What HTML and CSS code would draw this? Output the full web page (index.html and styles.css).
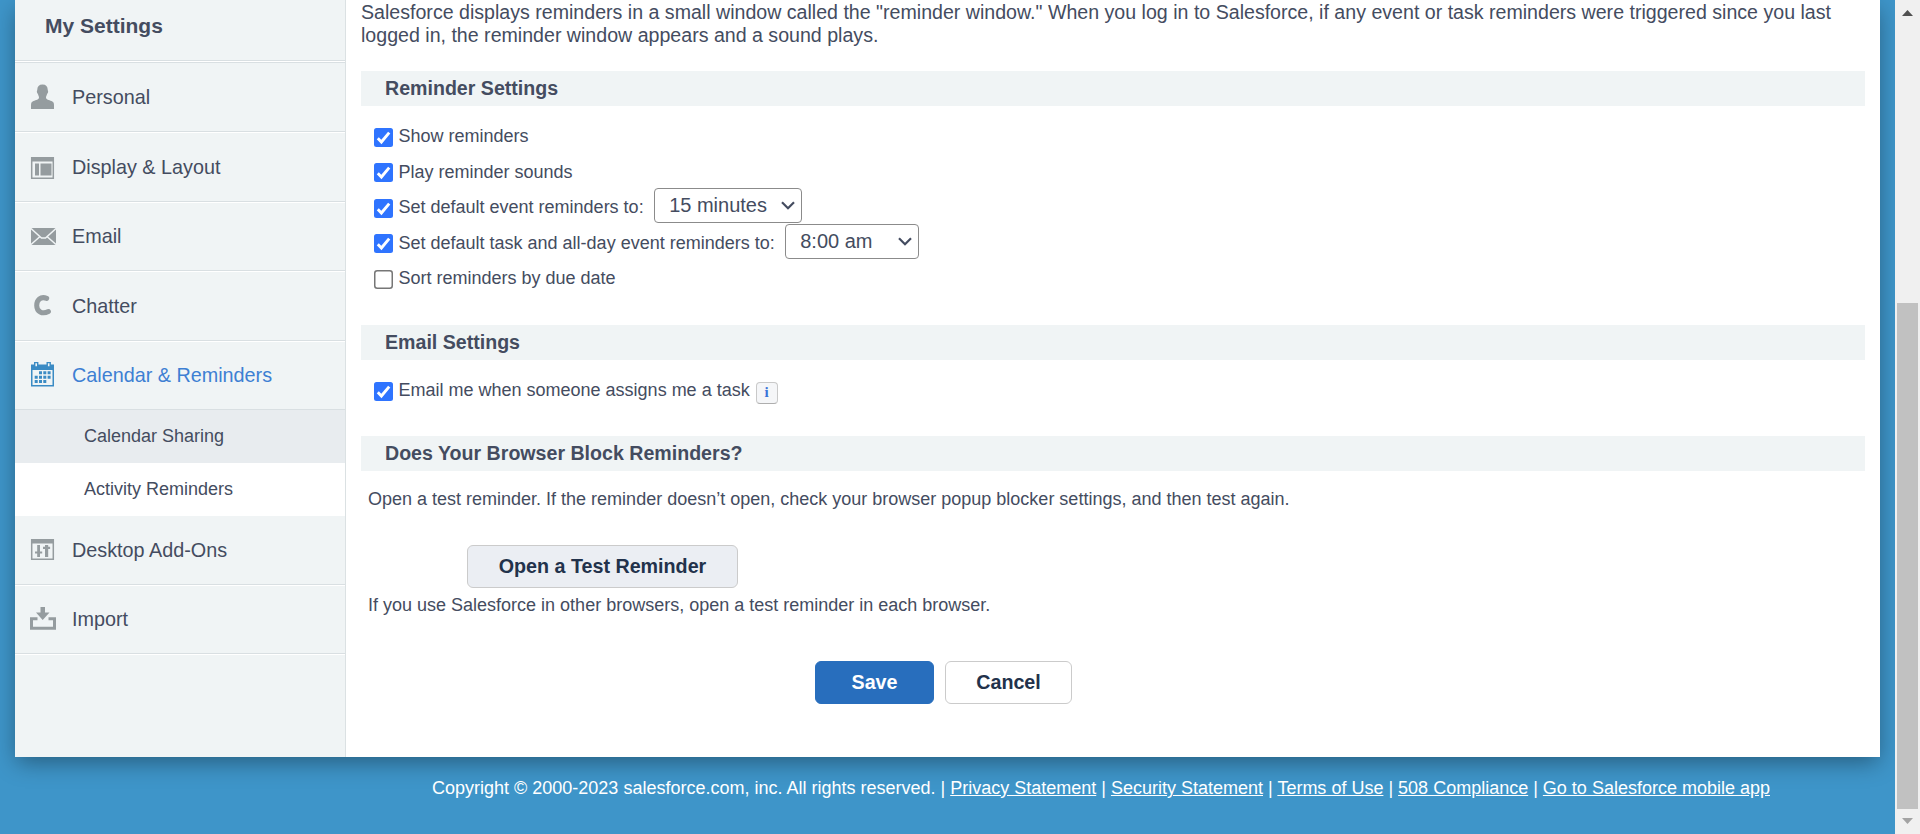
FILE: index.html
```html
<!DOCTYPE html>
<html lang="en">
<head>
<meta charset="utf-8">
<title>Activity Reminders</title>
<link rel="stylesheet" href="styles.css">
</head>
<body>
<svg class="defs" width="0" height="0">
  <symbol id="checked" viewBox="0 0 19 19"><rect width="19" height="19" rx="2.500" fill="#2f74ff"/><path d="M3.800 10.300 7.400 14 15.200 4.600" fill="none" stroke="#fff" stroke-width="2.900"/></symbol>
  <symbol id="unchecked" viewBox="0 0 19 19"><rect x=".75" y=".75" width="17.500" height="17.500" rx="2.500" fill="#fff" stroke="#767676" stroke-width="1.500"/></symbol>
</svg>
<div class="screen">
  <div class="viewport">
    <div class="page">
      <nav class="sidebar">
        <h2 class="nav-title">My Settings</h2>
        <a class="item personal"><svg class="icon" viewBox="0 0 26 26"><path d="M12.500 0.500c3.500 0 5.200 2 5.200 5 0 1 .6 1.400.4 2.500-.2 1.200-.8 1.400-1.100 2.200-.4 1.400-1 2-1 3.300 0 2.200 3 2.500 5.500 3.500 2 .8 2.500 2 2.500 4v4H1v-4c0-2 .5-3.200 2.500-4 2.500-1 5.500-1.300 5.500-3.500 0-1.300-.6-1.900-1-3.300-.3-.8-.9-1-1.100-2.200C6.700 6.900 7.300 6.500 7.300 5.500c0-3 1.700-5 5.200-5z" fill="#959c9f"/></svg>Personal</a>
        <a class="item"><svg class="icon" viewBox="0 0 26 26"><path d="M1.700 3.700h21.600v20.600H1.700z" fill="none" stroke="#959c9f" stroke-width="1.500"/><path d="M1 3h23v4.500H1zM5 9.500h4v12H5zm5.500 0h11v12h-11z" fill="#959c9f"/></svg>Display &amp; Layout</a>
        <a class="item"><svg class="icon" viewBox="0 0 26 26"><rect x="1" y="4" width="25" height="17" rx="1.500" fill="#959c9f"/><path d="M1 4.500 11.500 14h4L26 4.500M1 20.500l8.500-7.500M26 20.500 17.500 13" fill="none" stroke="#f0f4f5" stroke-width="1.500"/></svg>Email</a>
        <a class="item"><svg class="icon" viewBox="0 0 26 26"><path d="M16.700 5.300C10.500 3 6.700 7.200 6.700 12.500c0 6 5.500 9.300 11.700 6" fill="none" stroke="#959c9f" stroke-width="5" stroke-linecap="round"/></svg>Chatter</a>
        <a class="item active"><svg class="icon" viewBox="0 0 26 26"><path d="M1 2.500h23v22H1z" fill="#3b8bc4"/><path d="M2.500 8h20v15h-20z" fill="#f0f4f5"/><path d="M4.700.5h3v4.500h-3zm12.500 0h3v4.500h-3z" fill="#f0f4f5" stroke="#3b8bc4" stroke-width="1.400"/><path d="M9 9.300h3v3H9zm4.300 0h3v3h-3zm4.300 0h3v3h-3zM4.700 13.700h3v3h-3zm4.300 0h3v3H9zm4.300 0h3v3h-3zm4.300 0h3v3h-3zM4.700 18.100h3v3h-3zm4.300 0h3v3H9zm4.300 0h3v3h-3z" fill="#3b8bc4"/></svg>Calendar &amp; Reminders</a>
        <a class="sub">Calendar Sharing</a>
        <a class="sub current">Activity Reminders</a>
        <a class="item addons"><svg class="icon" viewBox="0 0 26 26"><path d="M1.700 2.700h21.600v19.600H1.700z" fill="none" stroke="#959c9f" stroke-width="1.500"/><path d="M1 2h23v4.500H1zM7.200 8H10v6.500h2.200v2H10V20H7.200v-3.500H5v-2h2.200zM15 20h3.200v-8h1.900V9.800h-1.900V8H15v1.800h-2V12h2z" fill="#959c9f"/></svg>Desktop Add-Ons</a>
        <a class="item"><svg class="icon" viewBox="0 0 26 26"><path d="M10.500 0H15v5.500h4.500L12.700 13 6 5.500h4.500z" fill="#959c9f"/><path d="M7.500 11.800h-6v9.500h23v-9.500h-6" fill="none" stroke="#959c9f" stroke-width="3"/></svg>Import</a>
      </nav>
      <main class="content">
        <p class="intro">Salesforce displays reminders in a small window called the "reminder window." When you log in to Salesforce, if any event or task reminders were triggered since you last<br>logged in, the reminder window appears and a sound plays.</p>
        <h3 class="section">Reminder Settings</h3>
        <div class="options">
          <label class="row"><svg class="box"><use href="#checked"/></svg>Show reminders</label>
          <label class="row"><svg class="box"><use href="#checked"/></svg>Play reminder sounds</label>
          <label class="row"><svg class="box"><use href="#checked"/></svg>Set default event reminders to:<span class="select minutes">15 minutes<svg class="caret" viewBox="0 0 14 9"><path d="M1 1.200l6 6 6-6"/></svg></span></label>
          <label class="row"><svg class="box"><use href="#checked"/></svg>Set default task and all-day event reminders to:<span class="select time">8:00 am<svg class="caret" viewBox="0 0 14 9"><path d="M1 1.200l6 6 6-6"/></svg></span></label>
          <label class="row"><svg class="box"><use href="#unchecked"/></svg>Sort reminders by due date</label>
        </div>
        <h3 class="section">Email Settings</h3>
        <div class="options email">
          <label class="row"><svg class="box"><use href="#checked"/></svg>Email me when someone assigns me a task<span class="info">i</span></label>
        </div>
        <h3 class="section">Does Your Browser Block Reminders?</h3>
        <p class="note">Open a test reminder. If the reminder doesn’t open, check your browser popup blocker settings, and then test again.</p>
        <button class="btn test">Open a Test Reminder</button>
        <p class="note after">If you use Salesforce in other browsers, open a test reminder in each browser.</p>
        <div class="actions"><button class="btn save">Save</button><button class="btn cancel">Cancel</button></div>
      </main>
    </div>
    <footer class="footer">Copyright © 2000-2023 salesforce.com, inc. All rights reserved. | <a>Privacy Statement</a> | <a>Security Statement</a> | <a>Terms of Use</a> | <a>508 Compliance</a> | <a>Go to Salesforce mobile app</a></footer>
  </div>
  <div class="scrollbar">
    <svg class="arrow" viewBox="0 0 11 6"><path d="M5.500 0 11 6H0z" fill="#505050"/></svg>
    <div class="thumb"></div>
    <svg class="arrow" viewBox="0 0 11 6"><path d="M0 0h11L5.500 6z" fill="#a3a3a3"/></svg>
  </div>
</div>
</body>
</html>
```
FILE: styles.css
```css
* { box-sizing: border-box; }
body { margin: 0; font-family: "Liberation Sans", Arial, sans-serif; color: #444c60; overflow: hidden; }
h2, h3, p { margin: 0; }
.defs { position: absolute; }
.screen { display: flex; height: 834px; }
.viewport { width: 1895px; height: 834px; padding: 0 15px; background: #3e95c9; overflow: hidden; }
.page { display: flex; height: 757px; background: #fff; box-shadow: 0 7px 22px -2px rgba(0, 0, 0, .38); }

.sidebar { width: 331px; background: #f0f4f5; border-right: 1px solid #dbe1e3; display: flex; flex-direction: column; }
.nav-title { height: 62px; padding: 14px 0 0 30px; font-size: 21px; line-height: 24px; border-bottom: 1px solid #fff; box-shadow: inset 0 -1px #d9dfe2; }
.item { height: 69.5px; flex: none; display: flex; align-items: center; padding: 0 0 0 15px; font-size: 19.800px; border-bottom: 1px solid #fff; box-shadow: inset 0 -1px #d9dfe2; }
.personal { height: 71px; border-top: 1px solid #d9dfe2; }
.personal .icon { margin-top: -2px; }
.icon { width: 26px; height: 26px; margin-right: 16px; }
.active { height: 68px; color: #3d7fd3; border-bottom: 0; }
.active .icon { margin-top: -2px; }
.addons { height: 70px; }
.sub { height: 53px; flex: none; padding: 15px 0 0 69px; font-size: 18px; line-height: 22px; background: #e8ecef; }
.current { background: #fff; }

.content { flex: 1; padding: 0 15px; }
.intro { padding-top: 1px; font-size: 19.600px; line-height: 23px; height: 71px; white-space: nowrap; }
.section { height: 35px; padding-left: 24px; font-size: 19.600px; line-height: 34px; background: #f0f4f5; }
.options { height: 219px; padding: 13px 0 0 13px; font-size: 18px; }
.options.email { height: 76px; padding-top: 13px; }
.row { display: flex; align-items: center; height: 35.500px; }
.box { width: 19px; height: 19px; margin: 1px 5.500px 0 0; }
.select { height: 35px; margin: -4px 0 0 10.500px; padding: 0 6px 0 14px; display: flex; align-items: center; justify-content: space-between; font-size: 20px; background: #fff; border: 1px solid #8b8b8b; border-radius: 4px; }
.minutes { width: 148px; }
.time { width: 134px; }
.caret { width: 14px; height: 9px; }
.caret path { fill: none; stroke: #444c60; stroke-width: 2.200; }
.info { width: 22px; height: 22px; margin: 5px 0 0 6px; border: 1.500px solid #c9c9c9; border-bottom-color: #aeaeae; border-radius: 4px; background: #f5f6f8; color: #3b74d8; font: bold 15px/19px "Liberation Serif", serif; text-align: center; }
.note { padding: 18px 0 0 7px; font-size: 18px; line-height: 21px; }
.btn { display: block; height: 43px; padding: 0; font: bold 19.700px "Liberation Sans", Arial, sans-serif; color: #22324b; border: 1px solid #cbcbcb; border-radius: 6px; background: #fff; }
.test { width: 271px; margin: 35px 0 0 106px; background: #ebeef3; }
.after { padding-top: 7px; }
.actions { display: flex; gap: 11px; margin: 45px 0 0 454px; }
.save { width: 119px; color: #fff; background: #286ebd; border-color: #286ebd; }
.cancel { width: 127px; }

.footer { padding: 20px 0 0 417px; font-size: 18px; line-height: 22px; color: #fff; white-space: nowrap; }
.footer a { text-decoration: underline; }

.scrollbar { width: 25px; background: #f0f0f0; display: flex; flex-direction: column; align-items: center; justify-content: space-between; padding: 10px 0; }
.arrow { width: 11px; height: 6px; }
.thumb { width: 21px; height: 506px; margin: 287px 0 9px; background: #c1c1c1; }
```
